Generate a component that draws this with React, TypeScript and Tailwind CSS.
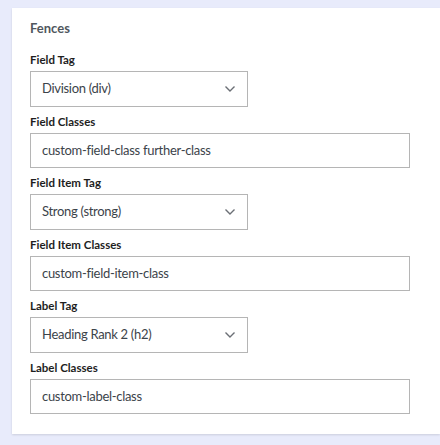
import React from 'react';

const font = { fontFamily: 'Lato, "Noto Sans", sans-serif' };

function Chevron() {
  return (
    <svg width="12" height="8" viewBox="0 0 12 8" fill="none" className="text-[#6b6f75]">
      <path d="M1.5 1.5 L6 6 L10.5 1.5" stroke="currentColor" strokeWidth="1.4" />
    </svg>
  );
}

function SelectField({ label, value }: { label: string; value: string }) {
  return (
    <div className="flex flex-col">
      <label className="text-[11.5px] font-bold text-[#1e1e1e] leading-[14px] mb-[4px]">{label}</label>
      <div className="flex items-center justify-between w-[218px] h-[36px] border border-[#b5b5b5] bg-white pl-[11px] pr-[11px]">
        <span className="text-[13px] tracking-[-0.3px] text-[#3c434a]">{value}</span>
        <Chevron />
      </div>
    </div>
  );
}

function TextField({ label, value }: { label: string; value: string }) {
  return (
    <div className="flex flex-col">
      <label className="text-[11.5px] font-bold text-[#1e1e1e] leading-[14px] mb-[4px]">{label}</label>
      <div className="flex items-center w-[380px] h-[35px] border border-[#b5b5b5] bg-white pl-[11px]">
        <span className="text-[13px] tracking-[-0.3px] text-[#3c434a]">{value}</span>
      </div>
    </div>
  );
}

export default function App() {
  return (
    <div className="w-[440px] h-[445px] bg-[#e8ebfb] pt-[8px] pl-[12px]" style={font}>
      <div className="bg-white h-[426px] shadow-[0_1px_2px_rgba(0,0,0,0.12)] pl-[18px] pt-[11px] flex flex-col">
        <h2 className="text-[13px] font-bold text-[#50575e] leading-[18px] mb-[16px]">Fences</h2>
        <div className="flex flex-col gap-[8px]">
          <SelectField label="Field Tag" value="Division (div)" />
          <TextField label="Field Classes" value="custom-field-class further-class" />
          <SelectField label="Field Item Tag" value="Strong (strong)" />
          <TextField label="Field Item Classes" value="custom-field-item-class" />
          <SelectField label="Label Tag" value="Heading Rank 2 (h2)" />
          <TextField label="Label Classes" value="custom-label-class" />
        </div>
      </div>
    </div>
  );
}
